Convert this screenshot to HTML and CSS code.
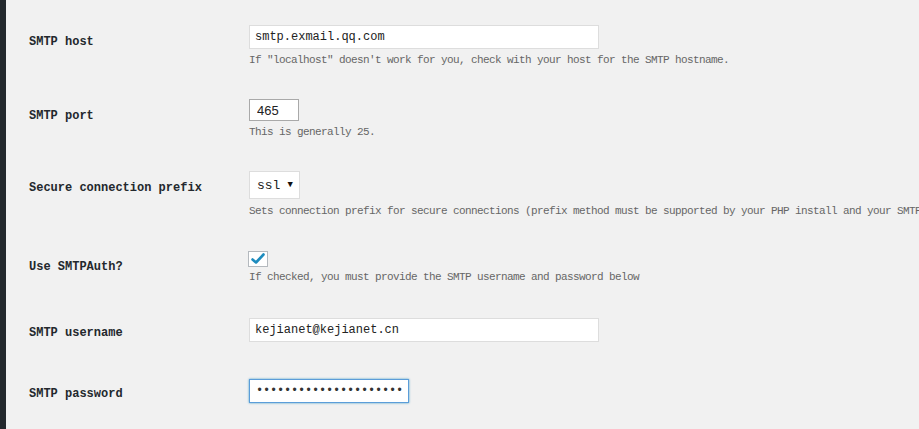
FILE: index.html
```html
<!DOCTYPE html>
<html>
<head>
<meta charset="utf-8">
<link rel="stylesheet" href="styles.css">
</head>
<body>
<div class="wrap">
  <div class="sidebar"></div>
  <form class="main">
    <div class="row r1">
      <div class="label">SMTP host</div>
      <div class="field">
        <input class="text wide" type="text" value="smtp.exmail.qq.com">
        <p class="desc">If "localhost" doesn't work for you, check with your host for the SMTP hostname.</p>
      </div>
    </div>
    <div class="row r2">
      <div class="label">SMTP port</div>
      <div class="field">
        <input class="text port" type="text" value="465">
        <p class="desc">This is generally 25.</p>
      </div>
    </div>
    <div class="row r3">
      <div class="label">Secure connection prefix</div>
      <div class="field">
        <div class="select"><span>ssl</span><span class="arrow">▼</span></div>
        <p class="desc desc-sel">Sets connection prefix for secure connections (prefix method must be supported by your PHP install and your SMTP server)</p>
      </div>
    </div>
    <div class="row r4">
      <div class="label">Use SMTPAuth?</div>
      <div class="field">
        <div class="checkbox"><svg width="14" height="12" viewBox="0 0 14 12"><path d="M1.5 6.5 L5 9.5 L12.5 1.5" fill="none" stroke="#1e8cbe" stroke-width="2.6" stroke-linecap="round" stroke-linejoin="round"/></svg></div>
        <p class="desc desc-chk">If checked, you must provide the SMTP username and password below</p>
      </div>
    </div>
    <div class="row r5">
      <div class="label">SMTP username</div>
      <div class="field">
        <input class="text wide" type="text" value="kejianet@kejianet.cn">
      </div>
    </div>
    <div class="row r6">
      <div class="label">SMTP password</div>
      <div class="field">
        <input class="text pass" type="password" value="abcdefghijklmnopqrstu">
      </div>
    </div>
  </form>
</div>
</body>
</html>
```
FILE: styles.css
```css
html, body {
  margin: 0;
  padding: 0;
  background: #f1f1f1;
  height: 429px;
  overflow: hidden;
}
.wrap {
  display: flex;
  min-height: 429px;
}
.sidebar {
  width: 6px;
  flex: none;
  background: #23282d;
}
.main {
  flex: 1;
  padding: 10px 0 0 23px;
  min-width: 0;
  overflow: hidden;
}
.row {
  display: grid;
  grid-template-columns: 220px 1fr;
  padding: 15px 0 17px;
}
.r4 { padding-top: 16px; padding-bottom: 19px; }
.r5 { padding-bottom: 21px; }
.label {
  font: bold 12px/20px "Liberation Mono", monospace;
  color: #23282d;
  padding-top: 7px;
  white-space: nowrap;
}
.r4 .label { padding-top: 6px; }
.r5 .label, .r6 .label { padding-top: 5px; }
.field {
  min-width: 0;
}
.text {
  display: block;
  box-sizing: border-box;
  margin: 0;
  height: 24px;
  padding: 0 5px;
  border: 1px solid #dddddd;
  background: #fff;
  font: 12px "Liberation Mono", monospace;
  color: #222;
  outline: none;
}
.wide { width: 350px; }
.port {
  width: 50px;
  height: 22px;
  padding: 0 7px;
  border-color: #a9a9a9;
  font: 13px "Liberation Sans", sans-serif;
}
.pass {
  width: 160px;
  padding: 0 6px;
  border-color: #5b9dd9;
  box-shadow: 0 0 2px rgba(30, 140, 190, 0.8);
  letter-spacing: -0.2px;
  color: #333;
}
.select {
  box-sizing: border-box;
  width: 51px;
  height: 28px;
  border: 1px solid #dddddd;
  background: #fff;
  display: flex;
  align-items: center;
  justify-content: space-between;
  padding: 0 6px 0 7px;
  font: 13px "Liberation Mono", monospace;
  color: #222;
}
.arrow {
  font-size: 9px;
  color: #111;
}
.checkbox {
  box-sizing: border-box;
  width: 20px;
  height: 16px;
  margin-left: -1px;
  border: 1px solid #b4b9be;
  background: #fff;
  display: flex;
  align-items: center;
  justify-content: center;
}
.desc {
  margin: 4px 0 0;
  font: 11px/14px "Liberation Mono", monospace;
  letter-spacing: -0.6px;
  color: #666;
  white-space: nowrap;
}
.desc-sel { margin-top: 5px; }
.desc-chk { margin-top: 3px; }
```
